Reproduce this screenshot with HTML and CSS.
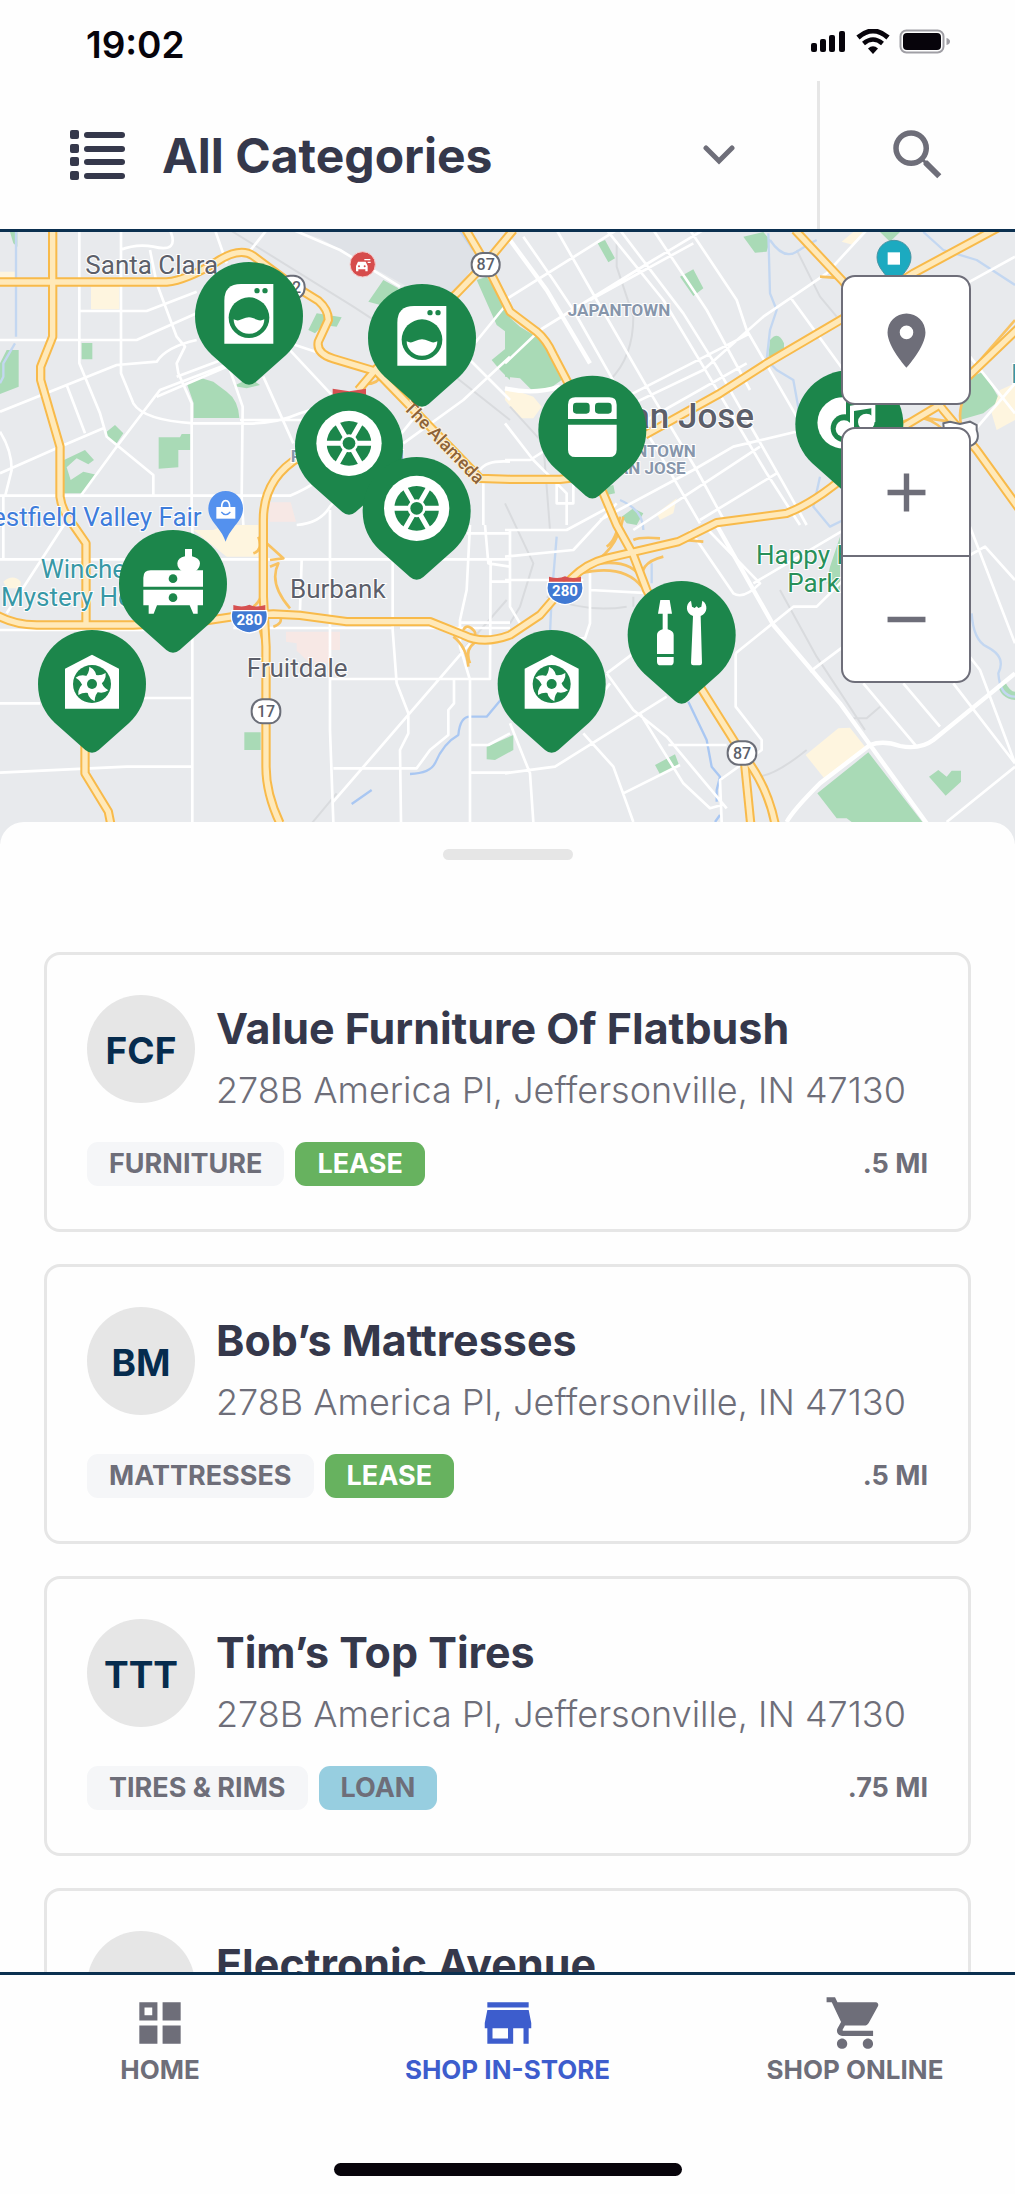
FILE: index.html
```html
<!DOCTYPE html>
<html lang="en">
<head>
    <meta charset="UTF-8">
    <meta name="viewport" content="width=device-width, initial-scale=1.0">
    <title>Shop In-Store</title>
    <link rel="stylesheet" href="styles.css">
</head>
<body>
    <div class="app">
        <div class="status-bar">
            <span class="time">19:02</span>
            <svg class="status-icons" viewBox="0 0 140 26" aria-hidden="true">
                <rect x="0" y="14" width="6" height="9" rx="2"/>
                <rect x="9" y="10" width="6" height="13" rx="2"/>
                <rect x="18" y="6" width="6" height="17" rx="2"/>
                <rect x="28" y="2" width="6" height="21" rx="2"/>
                <path d="M47 8.500Q62 -4.500 77 8.500" fill="none" stroke="#07040b" stroke-width="5"/>
                <path d="M52.500 14.500Q62 6.500 71.500 14.500" fill="none" stroke="#07040b" stroke-width="4.500"/>
                <path d="M57 19.500Q62 15 67 19.500L62 25Z"/>
                <rect x="89.500" y="1.500" width="43" height="22" rx="6" fill="none" stroke="#a09fa5" stroke-width="2"/>
                <rect x="92" y="4" width="38" height="17" rx="4"/>
                <path d="M135.500 9Q139 10 139 12.500T135.500 16Z" fill="#a09fa5"/>
            </svg>
        </div>

        <header class="header">
            <label class="category">
                <svg class="list-icon" viewBox="0 0 55 50" aria-hidden="true">
                    <g id="list-row">
                        <rect x="0" y="0" width="9" height="9" rx="2"/>
                        <rect x="14" y="2" width="41" height="6" rx="3"/>
                    </g>
                    <use href="#list-row" y="14"/>
                    <use href="#list-row" y="27"/>
                    <use href="#list-row" y="41"/>
                </svg>
                <select class="category-select" aria-label="Category">
                    <option>All Categories</option>
                    <option>Furniture</option>
                    <option>Mattresses</option>
                    <option>Tires &amp; Rims</option>
                </select>
                <svg class="chevron" viewBox="0 0 32 20" aria-hidden="true"><path d="M3 3L16 16L29 3"/></svg>
            </label>
            <button class="search-button" type="button" aria-label="Search">
                <svg viewBox="0 0 24 24"><path d="M15.500 14h-.79l-.28-.27A6.470 6.470 0 0 0 16 9.500 6.500 6.500 0 1 0 9.500 16c1.610 0 3.090-.59 4.230-1.570l.27.28v.79l5 4.990L20.490 19l-4.990-5zm-6 0C7.010 14 5 11.990 5 9.500S7.010 5 9.500 5 14 7.010 14 9.500 11.990 14 9.500 14z"/></svg>
            </button>
        </header>

        <section class="map">
            <svg class="map-canvas" viewBox="0 6 3045 1836" preserveAspectRatio="xMidYMin slice" role="img" aria-label="Map of San Jose">
                <defs>
                    <path id="pin" d="M0 -162A162 162 0 0 1 162 0C162 50 142 87 112 116L20 198Q0 215 -20 198L-112 116C-142 87 -162 50 -162 0A162 162 0 0 1 0 -162Z"/>
                    <g id="pin-washer">
                        <use href="#pin" fill="#1c864b"/>
                        <path fill="#fff" d="M-24 -96H73V83H-74V-46Q-74 -96 -24 -96Z"/>
                        <g fill="#1c864b"><circle cx="24" cy="-76" r="8"/><circle cx="48" cy="-76" r="8"/><circle cy="5" r="61"/></g>
                        <path fill="#fff" d="M-46 10C-28 20 -18 4 0 4C18 4 28 20 46 10A46 43 0 0 1 -46 10Z"/>
                    </g>
                    <g id="pin-wheel">
                        <use href="#pin" fill="#1c864b"/>
                        <g transform="translate(0 -8)">
                            <circle r="98" fill="#fff"/>
                            <circle r="67" fill="#1c864b"/>
                            <path stroke="#fff" stroke-width="15" d="M-70 0H70M-35 -61L35 61M35 -61L-35 61"/>
                            <circle r="27" fill="#fff"/>
                            <circle r="19" fill="#1c864b"/>
                        </g>
                    </g>
                    <g id="pin-fridge">
                        <use href="#pin" fill="#1c864b"/>
                        <path fill="#fff" d="M-51 -97H51Q73 -97 73 -75V-32H-73V-75Q-73 -97 -51 -97ZM-73 -15H73V60Q73 82 51 82H-51Q-73 82 -73 60Z"/>
                        <rect x="-58" y="-81" width="50" height="33" rx="10" fill="#1c864b"/>
                        <rect x="8" y="-81" width="50" height="33" rx="10" fill="#1c864b"/>
                    </g>
                    <g id="pin-dresser">
                        <use href="#pin" fill="#1c864b"/>
                        <path fill="#fff" d="M-67 -41H90V8H-89V-19Q-89 -41 -67 -41ZM-89 17H90V64H74V89H61L50 64H-48L-58 89H-73V64H-89Z"/>
                        <path fill="#fff" d="M36 -105H57V-83Q81 -77 81 -62Q80 -47 67 -38H27Q13 -48 13 -62Q14 -78 36 -83Z"/>
                        <circle cy="-16" r="13" fill="#1c864b"/>
                        <circle cy="41" r="13" fill="#1c864b"/>
                    </g>
                    <path id="blade" d="M-24 -17Q-8 -30 -8 -52Q16 -42 15 -8Z"/>
                    <g id="pin-garage">
                        <use href="#pin" fill="#1c864b"/>
                        <path fill="#fff" d="M0 -88L81 -46V74H-81V-46Z"/>
                        <circle r="57" fill="#1c864b"/>
                        <g fill="#fff">
                            <circle r="27"/>
                            <use href="#blade"/>
                            <use href="#blade" transform="rotate(60)"/>
                            <use href="#blade" transform="rotate(120)"/>
                            <use href="#blade" transform="rotate(180)"/>
                            <use href="#blade" transform="rotate(240)"/>
                            <use href="#blade" transform="rotate(300)"/>
                        </g>
                        <circle r="15" fill="#1c864b"/>
                    </g>
                    <g id="pin-tools">
                        <use href="#pin" fill="#1c864b"/>
                        <path fill="#fff" d="M-64 -105H-36L-29 -64H-42V-17Q-24 -12 -24 0V57H-74V0Q-74 -12 -57 -17V-64H-71ZM-74 66H-24V80Q-24 91 -35 91H-63Q-74 91 -74 80Z"/>
                        <path fill="#fff" d="M28 -103C10 -92 12 -66 34 -57L28 84Q28 91 35 91H54Q61 91 61 84L57 -57C78 -66 80 -92 62 -103L59 -85L50 -81L45 -86L39 -81L31 -85Z"/>
                    </g>
                    <g id="pin-music">
                        <use href="#pin" fill="#1c864b"/>
                        <path fill="#fff" d="M-10 -81A77 77 0 1 0 -10 72Z"/>
                        <circle cx="-14" cy="12" r="42" fill="#1c864b"/>
                        <g fill="#fff"><circle cx="-16" cy="13" r="25"/><circle cx="51" cy="-7" r="25"/><path d="M2 -56L78 -68V-7H66V-48L14 -40V13H2Z"/></g>
                    </g>
                    <g id="shield-280">
                        <path fill="#4079d3" stroke="#fff" stroke-width="4" d="M-52 -24H52Q60 10 38 28Q22 40 0 43Q-22 40 -38 28Q-60 10 -52 -24Z"/>
                        <path fill="#d65151" d="M-48 -41Q-20 -32 0 -42Q20 -32 48 -41V-26H-48Z"/>
                        <text class="shield-text" y="18">280</text>
                    </g>
                    <g id="highways">
                        <path d="M158 0V320L122 410V450L180 650V800Q186 845 222 888L258 940V1180"/>
                        <path d="M255 1500V1630L325 1745L332 1780"/>
                        <path d="M0 156H500Q560 150 650 95Q720 50 760 78L870 160L955 212Q985 238 985 270L955 335Q948 370 1000 386L1130 425L1440 745L1530 748H1680L1790 735"/>
                        <path d="M1540 0L1457 100L1370 190L1130 415L1075 480"/>
                        <path d="M1398 0L1457 100L1530 245L1610 305Q1640 330 1660 375L1710 470L1780 720L1850 885L1900 975L1940 1080L2100 1370L2225 1569Q2300 1660 2325 1780"/>
                        <path d="M2233 1590L2252 1780"/>
                        <path d="M-10 1155Q40 1184 110 1185H400L600 1175L700 1160L820 1152L900 1156L1040 1175H1290L1390 1215Q1450 1245 1530 1215L1620 1155L1715 1045Q1760 1000 1820 985L2035 935L2150 878L2360 850Q2440 820 2540 735L2710 590L2810 530L3060 290"/>
                        <path d="M2385 0L2530 155L2830 540L2930 660L3060 840"/>
                        <path d="M900 680Q790 745 790 870V1100L798 1250V1610Q798 1690 840 1780"/>
                        <path d="M1935 615L2160 490L2300 400L2530 265L2740 130L3000 -10"/>
                    </g>
                    <g id="ramps">
                        <path d="M1755 1010Q1850 970 1870 860M1740 1030Q1870 1000 1925 1070M1800 1000Q1900 990 1925 1050M1820 950Q1850 930 1860 860M1900 930Q1920 920 1980 925M1930 1060Q1910 1000 1990 980M2050 930L2110 935M760 970Q790 960 775 920M800 940L850 985L810 990M810 1010L835 1000Q805 1060 870 1135M760 1130Q790 1110 785 1060M820 1190Q850 1180 840 1160M780 1200L790 1240M1360 1220Q1400 1250 1405 1310M1440 1230Q1390 1250 1410 1300M1390 1200Q1400 1180 1420 1200T1390 1220M1080 460Q1130 470 1150 430M2460 140L2530 145M2700 580Q2770 540 2830 600M2880 460L3045 270M2750 560L2850 575M2900 480Q2860 570 2900 610"/>
                    </g>
                </defs>

                <rect y="6" width="3045" height="1836" fill="#e8eaed"/>
                <path fill="#dfe2e7" d="M900 6H1380L1440 70L1370 190L1240 180L960 25Z"/>

                <g fill="#a9dab6">
                    <path d="M30 6H52V50L40 40ZM0 400L20 360H56V470L0 492ZM245 339H277V388H245ZM560 460L605 445L640 455L680 485Q715 510 718 564H581V520ZM320 605L345 585L370 610L350 640L320 625ZM192 690L255 660L282 690L265 703L230 685L200 712L212 750L250 725L292 735L250 790H192ZM476 622H540L545 612H571V660H535V712L476 716ZM1105 215L1150 150L1195 175L1160 230ZM925 300L950 250L1025 262L1010 290L970 285L945 310ZM1430 150L1460 140L1530 240V315L1490 285ZM1475 390L1530 345V450L1500 420ZM700 468L750 445L780 465L740 475Z"/>
                    <path d="M1515 250L1560 290L1625 330L1685 450L1650 475L1595 480L1560 445L1515 440ZM2230 20L2290 6L2310 30L2300 65L2265 68ZM1793 40L1815 30L1845 85L1825 97ZM2040 140L2080 118L2110 175L2080 198ZM2305 380L2310 330Q2335 300 2352 340V365ZM2640 6H2700L2670 35ZM2890 450L2950 425L3000 510L2950 550L2880 570ZM1865 860L1900 835L1930 850L1910 885L1880 880ZM1820 770L1840 765L1845 790L1820 795ZM2520 920V1080L2480 1060L2490 1010ZM2995 1365L3015 1355Q3030 1385 3045 1385V1410Q3000 1405 2995 1365Z"/>
                    <path d="M733 1507H782V1560H733ZM1460 1550L1540 1515V1560L1485 1590L1460 1588ZM1965 1605L2025 1573L2037 1605L1980 1633ZM2452 1690L2605 1567L2770 1780H2560L2540 1765H2510ZM2787 1640L2815 1620L2840 1640L2855 1622H2883V1655L2837 1697Z"/>
                </g>
                <g fill="#fef5df">
                    <path d="M0 125H45V145H0ZM273 170H358V238H273ZM580 900H640L675 885H775V980H680ZM10 1055Q40 1030 62 1055V1075H20ZM1515 470L1600 500L1625 530L1600 565H1560L1515 510ZM1970 850L2030 805L2020 850L1980 870ZM2417 1575L2515 1495L2550 1493L2595 1550L2475 1648ZM2525 35L2560 6H2600L2560 45ZM2975 550L3000 480L3045 460V570L2990 600Z"/>
                    <path fill="#f7e8e5" d="M858 1205H1020V1260H990V1300H930L890 1262V1240L858 1235ZM808 817H872L888 875H808Z"/>
                </g>

                <g class="rail">
                    <path d="M690 0L1060 230L1290 380L1530 570M1530 530L1630 640L1650 900M1900 1100V1130M2340 1080L2450 1280L2595 1500M2560 1465H2600L2640 1430M2270 1640Q2320 1640 2420 1560M935 1780L1010 1690M1380 1270L1520 1110M1850 40V110L1900 260Q1900 380 1830 450M1515 820L1600 1000L1560 1130L1530 1180M2390 60L2460 200L2510 260M1640 1100Q1760 1150 1880 1130"/>
                </g>
                <g class="water">
                    <path d="M48 6V320M45 340L10 400V440L0 460M1378 0L1420 60M2305 10L2310 190L2330 240L2310 300L2300 390L2330 420L2380 450L2400 560L2420 640M2460 740L2440 830L2490 890L2530 870M2310 30Q2350 90 2390 65T2450 30M2770 6L2830 60L2930 90L3045 165M2915 1150Q2920 1230 2960 1250Q3020 1280 2995 1330Q3000 1400 3045 1400M1670 920L1655 1100L1650 1210M1860 810Q1930 840 1930 900M1955 1000V1060"/>
                    <path stroke="#a9c7f2" d="M1230 1632Q1290 1630 1305 1600Q1330 1540 1375 1515Q1380 1460 1410 1460L1460 1460L1510 1400M1055 1722L1115 1680M2065 1415L2120 1530L2135 1610L2160 1640L2150 1680V1715M2160 1755L2145 1776"/>
                </g>

                <g class="streets">
                    <path d="M238 0V400L300 550L320 620L460 735V795M363 0V430L400 520Q430 570 580 580H720Q820 585 900 550L1060 500M510 0Q540 70 460 50Q410 40 360 60M450 60L470 160L530 320L555 350L530 400L535 430L575 520V885M645 0L680 100M0 330H410L590 250M240 243H440L590 185M0 545L350 405L470 395Q500 350 590 330M0 730L180 650L310 595M200 465L255 610M0 605Q35 660 35 720L15 800M0 797H870Q960 760 1010 700M530 440L690 380M470 500L680 410M240 800L350 650L480 480L690 400M690 420L728 530L725 800L730 885M790 440L880 640M860 350L1000 500M720 570L1050 570M870 340L960 370M740 75L800 0M880 0L1020 60L1200 170M1530 210L1180 640M1380 360L1530 510M1530 380L1390 510L1210 640M1440 720Q1460 690 1530 695M890 885Q960 880 990 830L1050 760M1450 760V885"/>
                    <path d="M0 988H1530M10 800V988M195 880L20 1150M0 1200H580M577 885V1776M990 840V1500L1000 1776M905 990L900 1140M1178 990V1200L1190 1360L1225 1450L1225 1510L1200 1560L1203 1776M1410 885L1400 1080L1380 1170V1250L1410 1350V1776M0 1420H120M430 1404H580M0 1628L380 1610H580M990 1347H1470L1472 985M1000 1615H1250L1290 1560L1345 1515V1440L1362 1420V1350M1000 1715L1410 1240M1410 1545H1465L1530 1510M1410 1628H1530M1455 885L1465 1000L1530 1010M1380 1178H1530M1470 1055H1530M1400 910H1530M700 1194H1180M1200 1194H1530"/>
                    <path d="M1570 20L1660 150L1720 240L1850 470L1960 640L2100 880M1670 0L1790 210L1940 470L2090 720L2180 885M1820 0L1990 210L2110 410L2300 730L2400 885M1860 0L2050 250L2150 410L2350 760L2420 885M1960 0L2120 240L2250 480M2070 0L2210 210L2240 300L2390 560M1515 210L1850 0M1515 400L1620 300L1960 90L2110 0M1770 210L2080 40M1880 500L2250 310M1900 520L2110 420L2290 260L2480 130L2600 0M1940 570L2240 400M1800 870L2080 720L2200 650L2410 600M1900 900L2280 650M2100 870L2330 730M2370 200L2530 420M2900 160L3045 80M2910 380L3045 550M2890 640L3045 460M1515 690L1590 690L1700 620M1515 580L1600 690L1700 790V885M1670 750V820H1720V740M1515 980L1720 960L1850 820M1515 1050H1750M1515 900L1700 900L1830 830M1530 900V1130L1560 1180M1770 1080L1960 1090M1770 1030V1180L1755 1225H1690M1820 1330L1960 1225M1820 1330L1900 1440L2000 1520L2180 1735M1515 1630L1665 1610L1920 1450L2000 1400M1830 1360L1740 1480M1530 1480L1590 1630L1600 1776M1750 1510L1840 1610L1880 1720L1900 1776M1870 1690L2040 1605M1920 1450L2050 1660L2130 1735L2165 1725M2005 1545H2180M2207 1270V1430L2285 1530V1560L2160 1650L2165 1776M2207 1270L2380 1130L2450 1130L2550 1030M2070 900L2200 1090Q2230 1110 2280 1060L2110 885M2260 1060L2540 895M2430 1325L2530 1250M2540 800L2940 1320L3045 1600M2590 1360L2750 1550M2710 1360L2820 1490M2860 1360L3045 1600M2910 890L3045 1240M2910 975L2955 950L3045 1050M2840 1776L3045 1610"/>
                </g>
                <path class="avenue" d="M2150 885L2320 1185L2520 1420L2780 1780M2360 1776Q2380 1740 2460 1660L2610 1545Q2650 1530 2700 1548Q2760 1560 2800 1530L3045 1330M1515 10L1640 180L1770 400M1515 475Q1600 495 1680 470"/>

                <use href="#ramps" class="ramp"/>
                <use href="#highways" class="road-edge"/>
                <use href="#highways" class="road-fill"/>

                <g class="labels">
                    <text x="256" y="132">Santa Clara</text>
                    <text x="870" y="1105">Burbank</text>
                    <text x="740" y="1342">Fruitdale</text>
                    <text class="city" x="2262" y="595">San Jose</text>
                    <text class="area" x="1857" y="257">JAPANTOWN</text>
                    <text class="area" x="1940" y="680">DOWNTOWN</text>
                    <text class="area" x="1938" y="732">SAN JOSE</text>
                    <text class="area" x="1042" y="697">ROSE GARDEN</text>
                    <text class="street-name" transform="translate(1208 535) rotate(46)">The Alameda</text>
                    <text class="mall" x="605" y="888">Westfield Valley Fair</text>
                    <text class="museum" x="122" y="1045">Winchester</text>
                    <text class="museum" x="3" y="1128">Mystery House</text>
                    <text class="park" x="2268" y="1003">Happy Hollow</text>
                    <text class="park" x="2362" y="1087">Park</text>
                    <text class="museum" x="3033" y="460">P</text>
                </g>

                <g class="route">
                    <rect x="1415" y="69" width="84" height="70" rx="33"/><text x="1457" y="121">87</text>
                    <rect x="838" y="137" width="76" height="70" rx="33"/><text x="876" y="189">82</text>
                    <rect x="755" y="1408" width="86" height="72" rx="33"/><text x="798" y="1462">17</text>
                    <rect x="2183" y="1534" width="86" height="70" rx="33"/><text x="2226" y="1586">87</text>
                    <path d="M2830 580L2850 575L2880 582L2910 575L2930 585V600Q2945 640 2900 652Q2830 640 2830 580Z"/>
                </g>
                <path fill="#d65151" d="M998 476L1048 484L1098 476V500H998Z"/>
                <use href="#shield-280" x="748" y="1166"/>
                <use href="#shield-280" x="1695" y="1081"/>

                <circle cx="1088" cy="103" r="38" fill="#d64c4c" stroke="#f6c9c9" stroke-width="3"/>
                <path fill="#fff" d="M1068 124V108L1074 95H1097L1103 108V124H1096V118H1075V124ZM1093 87H1111V91H1093ZM1103 95H1112V99H1103Z"/>
                <circle cx="1077" cy="109" r="3" fill="#d64c4c"/><circle cx="1094" cy="109" r="3" fill="#d64c4c"/>

                <path fill="#5491ee" d="M677 783A52 52 0 0 1 729 835C729 875 692 890 677 935C662 890 625 875 625 835A52 52 0 0 1 677 783Z"/>
                <path fill="#fff" d="M649 831H706V866H649Z"/>
                <path fill="none" stroke="#fff" stroke-width="5" d="M665 832Q665 812 677 812T689 832"/>
                <path fill="none" stroke="#5491ee" stroke-width="4" d="M664 846Q677 862 691 846"/>

                <path fill="#1caac0" stroke="#4a95a3" stroke-width="3" d="M2682 31A51 51 0 0 1 2733 82C2733 115 2705 130 2682 175C2659 130 2631 115 2631 82A51 51 0 0 1 2682 31Z"/>
                <path fill="#fff" d="M2663 67H2700V104H2663Z"/>

                <use href="#pin-washer" x="747" y="258"/>
                <use href="#pin-washer" x="1266" y="324"/>
                <use href="#pin-wheel" x="1047" y="648"/>
                <use href="#pin-wheel" x="1250" y="843"/>
                <use href="#pin-fridge" x="1777" y="599"/>
                <use href="#pin-music" x="2548" y="583"/>
                <use href="#pin-dresser" x="519" y="1062"/>
                <use href="#pin-garage" x="276" y="1362"/>
                <use href="#pin-garage" x="1655" y="1362"/>
                <use href="#pin-tools" x="2045" y="1215"/>
            </svg>

            <div class="map-controls">
                <div class="control-group">
                    <button type="button" aria-label="My location">
                        <svg viewBox="0 0 24 24"><path d="M12 2C8.130 2 5 5.130 5 9c0 5.250 7 13 7 13s7-7.750 7-13c0-3.870-3.130-7-7-7zm0 9.500a2.500 2.500 0 1 1 0-5 2.500 2.500 0 0 1 0 5z"/></svg>
                    </button>
                </div>
                <div class="control-group">
                    <button type="button" aria-label="Zoom in">
                        <svg viewBox="0 0 24 24"><path d="M5 11h6V5h2v6h6v2h-6v6h-2v-6H5z"/></svg>
                    </button>
                    <button type="button" aria-label="Zoom out">
                        <svg viewBox="0 0 24 24"><path d="M5 11h14v2H5z"/></svg>
                    </button>
                </div>
            </div>
        </section>

        <main class="sheet">
            <div class="handle"></div>

            <article class="card">
                <div class="card-top">
                    <div class="avatar">FCF</div>
                    <div class="info">
                        <h2>Value Furniture Of Flatbush</h2>
                        <p>278B America Pl, Jeffersonville, IN 47130</p>
                    </div>
                </div>
                <div class="card-bottom">
                    <span class="tag">FURNITURE</span>
                    <span class="tag lease">LEASE</span>
                    <span class="distance">.5 MI</span>
                </div>
            </article>

            <article class="card">
                <div class="card-top">
                    <div class="avatar">BM</div>
                    <div class="info">
                        <h2>Bob’s Mattresses</h2>
                        <p>278B America Pl, Jeffersonville, IN 47130</p>
                    </div>
                </div>
                <div class="card-bottom">
                    <span class="tag">MATTRESSES</span>
                    <span class="tag lease">LEASE</span>
                    <span class="distance">.5 MI</span>
                </div>
            </article>

            <article class="card">
                <div class="card-top">
                    <div class="avatar">TTT</div>
                    <div class="info">
                        <h2>Tim’s Top Tires</h2>
                        <p>278B America Pl, Jeffersonville, IN 47130</p>
                    </div>
                </div>
                <div class="card-bottom">
                    <span class="tag">TIRES &amp; RIMS</span>
                    <span class="tag loan">LOAN</span>
                    <span class="distance">.75 MI</span>
                </div>
            </article>

            <article class="card">
                <div class="card-top">
                    <div class="avatar"></div>
                    <div class="info">
                        <h2>Electronic Avenue</h2>
                    </div>
                </div>
            </article>
        </main>

        <footer class="footer">
            <nav class="tabs">
                <a class="tab" href="#home">
                    <svg viewBox="0 0 24 24" fill-rule="evenodd"><path d="M4 4h7v7H4zM6 6v3h3V6zM13 4h7v7h-7zM4 13h7v7H4zM13 13h7v7h-7z"/></svg>
                    HOME
                </a>
                <a class="tab active" href="#in-store">
                    <svg viewBox="0 0 24 24"><path d="M20 4H4v2h16V4zm1 10v-2l-1-5H4l-1 5v2h1v6h10v-6h4v6h2v-6h1zm-9 4H6v-4h6v4z"/></svg>
                    SHOP IN-STORE
                </a>
                <a class="tab" href="#online">
                    <svg viewBox="0 0 24 24"><path d="M7 18c-1.100 0-1.990.9-1.990 2S5.900 22 7 22s2-.9 2-2-.9-2-2-2zM1 2v2h2l3.600 7.590-1.350 2.450c-.16.28-.25.61-.25.96 0 1.100.9 2 2 2h12v-2H7.420c-.14 0-.25-.11-.25-.25l.03-.12.9-1.630h7.450c.75 0 1.410-.41 1.750-1.030l3.580-6.490A1 1 0 0 0 20 4H5.210l-.94-2H1zm16 16c-1.100 0-1.990.9-1.990 2s.89 2 1.990 2 2-.9 2-2-.9-2-2-2z"/></svg>
                    SHOP ONLINE
                </a>
            </nav>
            <div class="home-indicator"></div>
        </footer>
    </div>
</body>
</html>
```
FILE: styles.css
```css
* {
    box-sizing: border-box;
}
body {
    margin: 0;
    font-family: Inter, "Liberation Sans", sans-serif;
    color: #35384b;
    background-color: #fefefe;
}
button,
select {
    font: inherit;
    color: inherit;
    border: 0;
    background: none;
}
.app {
    display: flex;
    flex-direction: column;
    height: 100vh;
}

/* status bar */
.status-bar {
    display: flex;
    justify-content: space-between;
    align-items: center;
    flex: none;
    height: 81px;
    padding: 8px 64px 0 86px;
}
.time {
    font-size: 37px;
    font-weight: 600;
    color: #07040b;
}
.status-icons {
    width: 140px;
    height: 26px;
    margin-bottom: 6px;
    fill: #07040b;
}

/* header */
.header {
    display: flex;
    flex: none;
    height: 151px;
    border-bottom: 3px solid #0b3050;
}
.category {
    display: flex;
    align-items: center;
    flex: 1;
    padding: 0 82px 0 70px;
    border-right: 3px solid #e6e6e6;
}
.list-icon {
    width: 55px;
    height: 50px;
    fill: #35384b;
}
.category-select {
    flex: 1;
    height: 100%;
    margin-left: 37px;
    padding: 0;
    appearance: none;
    font-size: 48px;
    font-weight: 700;
}
.chevron {
    width: 32px;
    height: 20px;
    fill: none;
    stroke: #6e6e79;
    stroke-width: 5px;
    stroke-linecap: round;
}
.search-button {
    display: flex;
    align-items: center;
    justify-content: center;
    width: 195px;
    padding: 0;
}
.search-button svg {
    width: 66px;
    height: 66px;
    fill: #6e6e79;
}

/* map */
.map {
    position: relative;
    flex: none;
    height: 612px;
    overflow: hidden;
}
.map-canvas {
    display: block;
    width: 100%;
    height: 100%;
}
.streets,
.avenue,
.rail,
.water,
.ramp,
.road-edge,
.road-fill {
    fill: none;
    stroke-linejoin: round;
}
.streets {
    stroke: #fff;
    stroke-width: 8px;
}
.avenue {
    stroke: #fff;
    stroke-width: 13px;
}
.rail {
    stroke: #d9dbde;
    stroke-width: 6px;
}
.water {
    stroke: #c3d7f1;
    stroke-width: 7px;
}
.ramp {
    stroke: #f8c261;
    stroke-width: 8px;
}
.road-edge {
    stroke: #f8ba4a;
    stroke-width: 28px;
}
.road-fill {
    stroke: #ffe9b9;
    stroke-width: 16px;
}
.labels,
.route text,
.shield-text {
    font-family: Roboto, sans-serif;
}
.labels {
    font-size: 78px;
    fill: #5c5f6a;
    stroke: #fff;
    stroke-width: 6px;
    paint-order: stroke;
}
.labels .city {
    font-size: 105px;
    font-weight: 500;
    text-anchor: end;
}
.labels .area {
    font-size: 51px;
    font-weight: 700;
    text-anchor: middle;
    fill: #8796ab;
}
.labels .street-name {
    font-size: 54px;
    font-weight: 500;
    fill: #8d6337;
    stroke: #fdf0d8;
}
.labels .mall {
    text-anchor: end;
    fill: #3f7ddb;
}
.labels .museum {
    fill: #3898a6;
}
.labels .park {
    fill: #27905a;
}
.route rect,
.route path {
    fill: #fff;
    stroke: #6b6e78;
    stroke-width: 6px;
}
.route text {
    font-size: 48px;
    font-weight: 500;
    text-anchor: middle;
    fill: #5c5f6a;
}
.shield-text {
    font-size: 45px;
    font-weight: 700;
    text-anchor: middle;
    fill: #fff;
}
.map-controls {
    position: absolute;
    top: 43px;
    right: 44px;
    display: flex;
    flex-direction: column;
    gap: 22px;
}
.control-group {
    width: 130px;
    border: 2px solid #6e6e79;
    border-radius: 14px;
    background-color: #fff;
}
.control-group button {
    display: flex;
    align-items: center;
    justify-content: center;
    width: 100%;
    height: 126px;
    padding: 0;
}
.control-group button + button {
    border-top: 2px solid #6e6e79;
}
.control-group svg {
    width: 65px;
    height: 65px;
    fill: #6e6e79;
}

/* store list */
.sheet {
    position: relative;
    display: flex;
    flex-direction: column;
    flex: 1;
    gap: 32px;
    min-height: 0;
    margin-top: -22px;
    padding: 27px 44px 0;
    overflow: hidden;
    border-radius: 24px 24px 0 0;
    background-color: #fefefe;
}
.handle {
    flex: none;
    align-self: center;
    width: 130px;
    height: 11px;
    margin-bottom: 60px;
    border-radius: 6px;
    background-color: #e6e6e6;
}
.card {
    flex: none;
    padding: 40px 40px 43px;
    border: 3px solid #e6e6e6;
    border-radius: 16px;
}
.card-top {
    display: flex;
    gap: 21px;
}
.avatar {
    display: flex;
    align-items: center;
    justify-content: center;
    flex: none;
    width: 108px;
    height: 108px;
    padding-top: 2px;
    border-radius: 50%;
    font-size: 37px;
    font-weight: 700;
    color: #062c4e;
    background-color: #e6e6e6;
}
.info {
    padding-top: 2px;
}
.info h2,
.info p {
    margin: 0;
    line-height: 62px;
    white-space: nowrap;
}
.info h2 {
    font-size: 43px;
    font-weight: 700;
}
.info p {
    font-size: 36px;
    font-weight: 300;
    color: #6e6e79;
}
.card-bottom {
    display: flex;
    align-items: center;
    gap: 11px;
    margin-top: 21px;
}
.tag,
.distance {
    font-size: 27px;
    font-weight: 700;
    line-height: 44px;
    color: #6e6e79;
}
.tag {
    padding: 0 22px;
    border-radius: 11px;
    background-color: #f5f6f8;
}
.lease {
    color: #fff;
    background-color: #67b25f;
}
.loan {
    color: #6e6e79;
    background-color: #97cee0;
}
.distance {
    margin-left: auto;
}

/* bottom tabs */
.footer {
    flex: none;
    height: 222px;
    padding: 17px 56px 0;
    border-top: 3px solid #0b3050;
}
.tabs {
    display: flex;
    justify-content: space-between;
}
.tab {
    display: flex;
    flex-direction: column;
    align-items: center;
    width: 208px;
    font-size: 26px;
    font-weight: 700;
    line-height: 32px;
    white-space: nowrap;
    text-decoration: none;
    color: #6e6e79;
}
.tab svg {
    width: 62px;
    height: 62px;
    fill: currentColor;
}
.active {
    color: #3d5dcd;
}
.home-indicator {
    width: 348px;
    height: 13px;
    margin: 77px auto 0;
    border-radius: 7px;
    background-color: #07040b;
}
```
